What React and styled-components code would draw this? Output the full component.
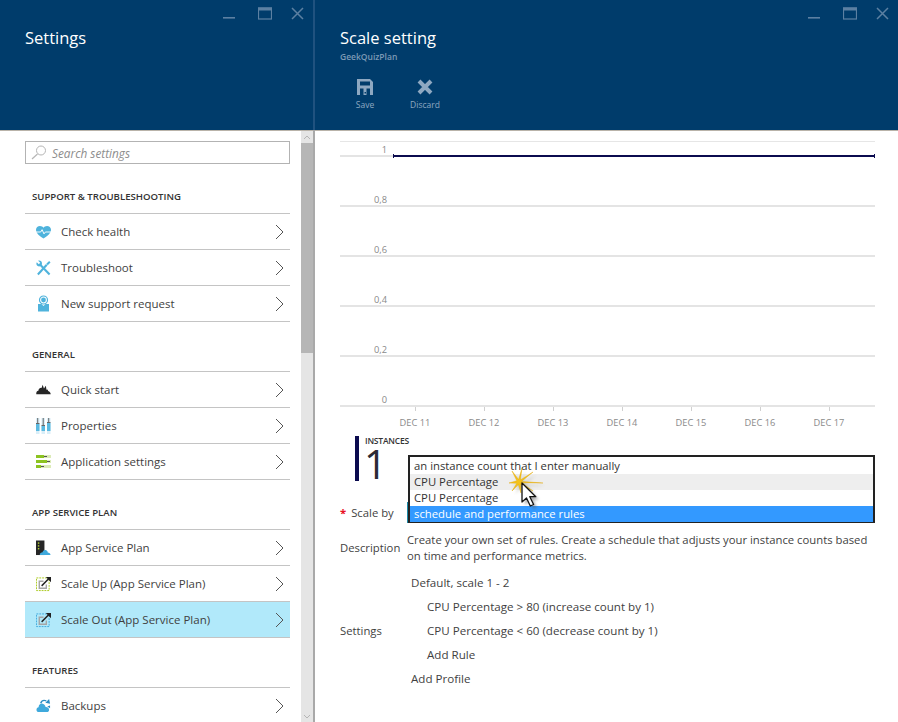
import React from 'react';
import styled, { createGlobalStyle } from 'styled-components';

const FONT = `'Open Sans', 'Noto Sans', sans-serif`;

const GlobalStyle = createGlobalStyle`
  * { box-sizing: border-box; }
  html, body { margin: 0; padding: 0; background: #fff; overflow: hidden; }
  body { font-family: ${FONT}; color: #3a3a3a; }
`;

const Page = styled.div`
  width: 898px;
  height: 722px;
  display: flex;
  overflow: hidden;
`;

const Blade = styled.section`
  display: flex;
  flex-direction: column;
  flex: ${(p) => (p.$grow ? 1 : 'none')};
  width: ${(p) => (p.$grow ? 'auto' : '313px')};
  min-width: 0;
  height: 100%;
`;

const Divider = styled.div`
  width: 2px;
  flex: none;
  height: 100%;
  background: linear-gradient(to bottom, #20527f 0, #20527f 130px, #a9a9a9 130px, #a9a9a9 100%);
`;

const Header = styled.header`
  height: 131px;
  flex: none;
  background: #003c6b;
  border-bottom: 1px solid #b9b3a9;
  display: flex;
  flex-direction: column;
`;

const WindowControls = styled.div`
  height: 26px;
  padding: 7px 9px 0 0;
  display: flex;
  justify-content: flex-end;
  gap: 21px;
  flex: none;
`;

const HeaderBody = styled.div`
  padding-left: ${(p) => p.$left}px;
`;

const Title = styled.h1`
  margin: 0;
  height: 24px;
  color: #fff;
  font-size: 16.5px;
  line-height: 24px;
  font-weight: 400;
`;

const Subtitle = styled.div`
  color: #7d9ab6;
  font-size: 8.5px;
  line-height: 12px;
  margin-top: 1px;
  font-weight: 600;
`;

const Commands = styled.div`
  display: flex;
  margin-top: 16px;
`;

const Command = styled.div`
  width: ${(p) => p.$w}px;
  display: flex;
  flex-direction: column;
  align-items: center;
  color: #8ea8c1;
  font-size: 8.5px;
  line-height: 12px;
  gap: 4px;
`;

const SideBody = styled.div`
  flex: 1;
  display: flex;
  min-height: 0;
`;

const SideContent = styled.div`
  flex: 1;
  padding: 10px 11px 0 25px;
  min-width: 0;
  overflow: hidden;
`;

const SearchBox = styled.div`
  height: 23px;
  border: 1px solid #b3b3b3;
  display: flex;
  align-items: center;
  padding-left: 5px;
  gap: 5px;
  color: #8d8d8d;
  font-size: 11.8px;
  font-style: italic;
`;

const SectionTitle = styled.h2`
  margin: 0;
  height: 50px;
  padding: 0 0 10px 7px;
  display: flex;
  align-items: flex-end;
  font-size: 9.6px;
  line-height: 13px;
  font-weight: 600;
  color: #333;
  border-bottom: 1px solid #c4c4c4;
`;

const Row = styled.div`
  height: 36px;
  display: flex;
  align-items: center;
  padding-left: 11px;
  border-bottom: 1px solid #c4c4c4;
  background: ${(p) => (p.$active ? '#b1e9fa' : 'transparent')};
  font-size: 11.5px;
  color: #3f3f3f;
`;

const RowIcon = styled.span`
  width: 15px;
  height: 16px;
  flex: none;
  display: flex;
  align-items: center;
  margin-right: 10px;
`;

const RowLabel = styled.span`
  flex: 1;
  white-space: nowrap;
`;

const Chevron = styled.svg`
  width: 9px;
  height: 16px;
  margin-right: 6px;
  flex: none;
`;

const Scrollbar = styled.div`
  width: 12px;
  flex: none;
  background: #e5e5e5;
  display: flex;
  flex-direction: column;
`;

const ScrollArrow = styled.div`
  height: 12px;
  flex: none;
  display: flex;
  align-items: center;
  justify-content: center;
  margin-top: ${(p) => (p.$up ? 0 : 'auto')};
`;

const ScrollThumb = styled.div`
  height: 210px;
  background: #b6b6b6;
`;

const MainBody = styled.div`
  flex: 1;
  padding: 10px 23px 0 25px;
  min-height: 0;
`;

const ChartSvg = styled.svg`
  display: block;
  width: 535px;
  height: 290px;
  text {
    font-family: ${FONT};
    font-size: 9.3px;
    fill: #8a8a8a;
  }
`;

const InstancesBlock = styled.div`
  margin: 5px 0 0 15px;
  height: 45px;
  border-left: 4px solid #0b0b4f;
  padding-left: 6px;
  display: flex;
  flex-direction: column;
`;

const InstancesLabel = styled.div`
  font-size: 8.5px;
  line-height: 10px;
  font-weight: 600;
  color: #333;
  letter-spacing: -0.2px;
`;

const InstancesValue = styled.div`
  font-size: 40px;
  line-height: 35px;
  font-weight: 400;
  color: #2b2b35;
  margin-left: -1px;
`;

const FormRow = styled.div`
  display: flex;
  align-items: ${(p) => (p.$center ? 'center' : 'flex-start')};
  margin-top: ${(p) => p.$top || 0}px;
  font-size: 11.3px;
  line-height: 16px;
  color: #3f3f3f;
`;

const FormLabel = styled.div`
  width: 67px;
  flex: none;
  padding-top: ${(p) => p.$pad || 0}px;
  white-space: nowrap;
`;

const Asterisk = styled.span`
  color: #e81123;
  font-weight: 700;
  margin-right: 5px;
`;

const SelectField = styled.div`
  flex: 1;
  height: 21px;
  border-left: 1px solid #1b8aa8;
  position: relative;
`;

const ListBox = styled.div`
  position: absolute;
  left: 0;
  right: 0;
  bottom: 0;
  height: 68px;
  background: #fff;
  border: 2px solid #222;
  padding: 1px 0;
`;

const Option = styled.div`
  height: 16px;
  line-height: 16px;
  padding-left: 4px;
  white-space: nowrap;
  color: ${(p) => (p.$selected ? '#fff' : '#333')};
  background: ${(p) => (p.$selected ? '#3399ff' : p.$hover ? '#eeeeee' : 'transparent')};
`;

const Pointer = styled.svg`
  position: absolute;
  left: 95px;
  top: 10px;
  width: 50px;
  height: 50px;
  overflow: visible;
`;

const Description = styled.div`
  flex: 1;
`;

const SettingsList = styled.div`
  flex: 1;
  display: flex;
  flex-direction: column;
  gap: 8px;
  padding-left: 4px;
  font-size: 11.6px;
`;

const SettingsItem = styled.div`
  padding-left: ${(p) => (p.$indent ? 16 : 0)}px;
`;

const WinIcon = ({ children }) => (
  <svg width="14" height="13" viewBox="0 0 14 13" fill="none">{children}</svg>
);

const WindowButtons = () => (
  <WindowControls>
    <WinIcon><rect x="0" y="10" width="12" height="1.6" fill="#5c80a2" /></WinIcon>
    <WinIcon>
      <rect x="0.5" y="1" width="13" height="11" stroke="#5c80a2" strokeWidth="1.2" />
      <rect x="0" y="0.5" width="14" height="3" fill="#5c80a2" />
    </WinIcon>
    <svg width="13" height="13" viewBox="0 0 13 13" fill="none" style={{ marginLeft: -2 }}>
      <path d="M1 1l11 11M12 1L1 12" stroke="#5c80a2" strokeWidth="1.5" />
    </svg>
  </WindowControls>
);

const HeartIcon = () => (
  <svg width="16" height="14" viewBox="0 0 16 14">
    <path d="M8 14C3.500 11 0 8 0 4.500 0 2 2 .5 4.200.5 6 .5 7.200 1.300 8 2.500 8.800 1.300 10 .5 11.800.5 14 .5 16 2 16 4.500 16 8 12.500 11 8 14z" fill="#4fb3dc" />
    <path d="M0 7h5l1.500-2.500 2 4.500 1.500-2h6" stroke="#fff" strokeWidth="1" fill="none" />
  </svg>
);

const WrenchIcon = () => (
  <svg width="16" height="16" viewBox="0 0 16 16">
    <path d="M2 15L11.500 4.500" stroke="#4fb3dc" strokeWidth="2.200" />
    <path d="M11 3.500L14 .5 15.500 2 12.500 5z" fill="#4fb3dc" />
    <path d="M14.500 15L4.500 4.500" stroke="#4fb3dc" strokeWidth="2.200" />
    <path d="M.8 1.800L3 4l1.500-1.500L2.300.3C4 -.3 6 .5 6.300 2.300 6.600 3.800 6 5 5 5.800 3.500 6.800 1.500 6.300.7 4.800.2 3.800.3 2.800.8 1.800z" fill="#4fb3dc" />
  </svg>
);

const SupportIcon = () => (
  <svg width="13" height="17" viewBox="0 0 13 17" style={{ marginLeft: 1 }}>
    <circle cx="6.500" cy="5" r="4" fill="none" stroke="#4fb3dc" strokeWidth="1.200" />
    <circle cx="6.500" cy="5" r="2.400" fill="#4fb3dc" />
    <path d="M1 9h3.500l2 2 2-2H12v7.500H1z" fill="#4fb3dc" />
  </svg>
);

const CloudDarkIcon = () => (
  <svg width="16" height="11" viewBox="0 0 16 11">
    <path d="M.3 10.500C0 8.500 1 7 2.500 6.800 3 4.500 4.500 3.500 6 3.800L7 .5l1.500 4L10.500 1.500l.7 4.500C11.800 5 12.500 5.500 13 7c1.500.3 2.700 1.800 2.700 3.500z" fill="#262626" />
  </svg>
);

const SlidersIcon = () => (
  <svg width="15" height="16" viewBox="0 0 15 16">
    {[0, 5.500, 11].map((x) => (
      <rect key={x} x={x} y="0" width="3.500" height="16" fill="#d9eef8" />
    ))}
    <rect x="0" y="6" width="3.500" height="7" fill="#5ab9e0" />
    <rect x="5.500" y="8" width="3.500" height="5" fill="#5ab9e0" />
    <rect x="11" y="5" width="3.500" height="8" fill="#5ab9e0" />
    <rect x="1.200" y="0" width="1" height="5" fill="#666" />
    <rect x="0" y="5" width="3.500" height="1" fill="#666" />
    <rect x="6.700" y="0" width="1" height="7" fill="#666" />
    <rect x="5.500" y="7" width="3.500" height="1" fill="#666" />
    <rect x="12.200" y="0" width="1" height="4" fill="#666" />
    <rect x="11" y="4" width="3.500" height="1" fill="#666" />
  </svg>
);

const AppSettingsIcon = () => (
  <svg width="15" height="13" viewBox="0 0 15 13">
    <rect x="0" y="0" width="15" height="3" fill="#dcebb8" />
    <rect x="0" y="5" width="15" height="3" fill="#dcebb8" />
    <rect x="0" y="10" width="15" height="3" fill="#dcebb8" />
    <rect x="0" y="0" width="8" height="3" fill="#8cc321" />
    <rect x="0" y="5" width="11" height="3" fill="#8cc321" />
    <rect x="0" y="10" width="5" height="3" fill="#8cc321" />
    <rect x="8" y="1" width="3" height="1" fill="#555" />
    <rect x="11" y="6" width="3" height="1" fill="#555" />
    <rect x="5" y="11" width="3" height="1" fill="#555" />
  </svg>
);

const PlanIcon = () => (
  <svg width="16" height="16" viewBox="0 0 16 16">
    <rect x="0" y="0" width="9" height="15.500" fill="#262626" />
    <rect x="2" y="2" width="1.500" height="1.500" fill="#b8d432" />
    <rect x="2" y="5" width="1.500" height="1.500" fill="#b8d432" />
    <rect x="2" y="8" width="1.500" height="1.500" fill="#b8d432" />
    <path d="M4 15.500c0-2 1.500-3 3-3 .5-2 2.500-3 4-2 1 .5 1.500 1.500 1.500 2.200 1.500 0 3 1 3 2.800z" fill="#3fa9dc" />
  </svg>
);

const ScaleIcon = ({ color }) => (
  <svg width="16" height="16" viewBox="0 0 16 16" fill="none">
    <rect x="0.500" y="1.500" width="13.500" height="13.500" stroke={color} strokeDasharray="2 1" />
    <path d="M8 5H3.500v7.500H11V8.500" stroke="#a5a5a5" strokeWidth="1.500" />
    <path d="M6 10L13.500 2.500" stroke="#222" strokeWidth="1.600" />
    <path d="M10.500 0.500h5.500V6z" fill="#222" />
  </svg>
);

const BackupIcon = () => (
  <svg width="16" height="14" viewBox="0 0 16 14">
    <path d="M3 13.500c-1.500 0-2.500-1-2.500-2.500s1-2.500 2.200-2.700C3 5.500 5 4 7 4.500c2 .5 3 2 3.200 3.500 2-.2 3.800 1 3.800 3 0 1.500-1 2.500-2.500 2.500z" fill="#3fa9dc" />
    <path d="M5 4c1-2.500 3.500-3.500 6-2.500" stroke="#2a8cc4" strokeWidth="1.500" fill="none" />
    <path d="M10 3.500l5 1-1-5z" fill="#2a8cc4" />
    <path d="M12 7.500l3-1v3z" fill="#2a8cc4" />
  </svg>
);

const SECTIONS = [
  {
    title: 'SUPPORT & TROUBLESHOOTING',
    rows: [
      { label: 'Check health', icon: <HeartIcon /> },
      { label: 'Troubleshoot', icon: <WrenchIcon /> },
      { label: 'New support request', icon: <SupportIcon /> },
    ],
  },
  {
    title: 'GENERAL',
    rows: [
      { label: 'Quick start', icon: <CloudDarkIcon /> },
      { label: 'Properties', icon: <SlidersIcon /> },
      { label: 'Application settings', icon: <AppSettingsIcon /> },
    ],
  },
  {
    title: 'APP SERVICE PLAN',
    rows: [
      { label: 'App Service Plan', icon: <PlanIcon /> },
      { label: 'Scale Up (App Service Plan)', icon: <ScaleIcon color="#a8c814" /> },
      { label: 'Scale Out (App Service Plan)', icon: <ScaleIcon color="#3fa9dc" />, active: true },
    ],
  },
  {
    title: 'FEATURES',
    rows: [{ label: 'Backups', icon: <BackupIcon /> }],
  },
];

const Y_LABELS = ['1', '0,8', '0,6', '0,4', '0,2', '0'];
const X_LABELS = ['DEC 11', 'DEC 12', 'DEC 13', 'DEC 14', 'DEC 15', 'DEC 16', 'DEC 17'];

const Chart = () => (
  <ChartSvg viewBox="0 0 535 290">
    <rect x="0" y="0" width="535" height="1" fill="#e6e6e6" />
    {Y_LABELS.map((label, i) => (
      <g key={label}>
        <rect x="0" y={14 + i * 50} width="535" height="2" fill="#e4e4e4" />
        <text x="47" y={12 + i * 50} textAnchor="end">{label}</text>
      </g>
    ))}
    <rect x="53" y="14" width="482" height="2" fill="#0b0b4f" />
    <rect x="53" y="13" width="1" height="4" fill="#0b0b4f" />
    <rect x="534" y="13" width="1" height="4" fill="#0b0b4f" />
    {X_LABELS.map((label, i) => (
      <g key={label}>
        <rect x={75 + i * 69} y="266" width="1" height="4" fill="#d0d0d0" />
        <text x={75 + i * 69} y="285" textAnchor="middle">{label}</text>
      </g>
    ))}
  </ChartSvg>
);

// star rays around (14, 15), the long one goes to the right
const STAR_TIPS = [[24, 1], [14, -10], [3, -14], [-7, -11], [-10, 1], [-7, 9], [2, 11], [14, 9]];
const starPoints = STAR_TIPS.flatMap(([x, y], i) => {
  const [nx, ny] = STAR_TIPS[(i + 1) % STAR_TIPS.length];
  const mx = (x + nx) / 2;
  const my = (y + ny) / 2;
  const len = Math.hypot(mx, my) || 1;
  return [`${14 + x},${15 + y}`, `${14 + (mx / len) * 2.5},${15 + (my / len) * 2.5}`];
}).join(' ');

const ARROW = 'M17 16v19l4.500-4 3.800 8 3.300-1.500-3.800-7.800h6z';

const CursorBurst = () => (
  <Pointer viewBox="0 0 50 50">
    <defs>
      <filter id="soft" x="-50%" y="-50%" width="200%" height="200%">
        <feGaussianBlur stdDeviation="1.500" />
      </filter>
    </defs>
    <polygon points={starPoints} fill="#6d6d50" opacity="0.4" filter="url(#soft)" transform="translate(3 3)" />
    <polygon points={starPoints} fill="#f3c21c" stroke="#e0a400" strokeWidth="0.400" />
    <path d={ARROW} fill="#555" opacity="0.5" filter="url(#soft)" transform="translate(3 3)" />
    <path d={ARROW} fill="#fff" stroke="#111" strokeWidth="1.300" strokeLinejoin="round" />
  </Pointer>
);

export default function App() {
  return (
    <Page>
      <GlobalStyle />
      <Blade>
        <Header>
          <WindowButtons />
          <HeaderBody $left={25}>
            <Title>Settings</Title>
          </HeaderBody>
        </Header>
        <SideBody>
          <SideContent>
            <SearchBox>
              <svg width="16" height="15" viewBox="0 0 16 15" fill="none">
                <circle cx="10" cy="5.500" r="4.500" stroke="#b5b5b5" />
                <path d="M6.500 9L1 14" stroke="#b5b5b5" strokeWidth="1.200" />
              </svg>
              Search settings
            </SearchBox>
            {SECTIONS.map((section) => (
              <div key={section.title}>
                <SectionTitle>{section.title}</SectionTitle>
                {section.rows.map((row) => (
                  <Row key={row.label} $active={row.active}>
                    <RowIcon>{row.icon}</RowIcon>
                    <RowLabel>{row.label}</RowLabel>
                    <Chevron viewBox="0 0 9 16" fill="none">
                      <path d="M1 1l7 7-7 7" stroke="#555" strokeWidth="1" />
                    </Chevron>
                  </Row>
                ))}
              </div>
            ))}
          </SideContent>
          <Scrollbar>
            <ScrollArrow $up>
              <svg width="8" height="5" viewBox="0 0 8 5" fill="none">
                <path d="M1 4l3-3 3 3" stroke="#b5b5b5" />
              </svg>
            </ScrollArrow>
            <ScrollThumb />
            <ScrollArrow>
              <svg width="8" height="5" viewBox="0 0 8 5" fill="none">
                <path d="M1 1l3 3 3-3" stroke="#b5b5b5" />
              </svg>
            </ScrollArrow>
          </Scrollbar>
        </SideBody>
      </Blade>
      <Divider />
      <Blade $grow>
        <Header>
          <WindowButtons />
          <HeaderBody $left={25}>
            <Title>Scale setting</Title>
            <Subtitle>GeekQuizPlan</Subtitle>
            <Commands>
              <Command $w={50}>
                <svg width="16" height="16" viewBox="0 0 16 16">
                  <path d="M0 0h13l3 3v13H0z" fill="#8ea8c1" />
                  <rect x="3" y="2.500" width="10" height="4" fill="#003c6b" />
                  <rect x="3" y="9.500" width="3.500" height="6.500" fill="#003c6b" />
                  <rect x="9.500" y="9.500" width="3.500" height="6.500" fill="#003c6b" />
                  <rect x="7.500" y="13" width="1.500" height="1.500" fill="#003c6b" />
                </svg>
                Save
              </Command>
              <Command $w={70}>
                <svg width="16" height="16" viewBox="0 0 16 16">
                  <path d="M2 2l12 12M14 2L2 14" stroke="#8ea8c1" strokeWidth="4" />
                </svg>
                Discard
              </Command>
            </Commands>
          </HeaderBody>
        </Header>
        <MainBody>
          <Chart />
          <InstancesBlock>
            <InstancesLabel>INSTANCES</InstancesLabel>
            <InstancesValue>1</InstancesValue>
          </InstancesBlock>
          <FormRow $center $top={21}>
            <FormLabel><Asterisk>*</Asterisk>Scale by</FormLabel>
            <SelectField>
              <ListBox>
                <Option>an instance count that I enter manually</Option>
                <Option $hover>CPU Percentage</Option>
                <Option>CPU Percentage</Option>
                <Option $selected>schedule and performance rules</Option>
                <CursorBurst />
              </ListBox>
            </SelectField>
          </FormRow>
          <FormRow $top={9}>
            <FormLabel $pad={8}>Description</FormLabel>
            <Description>
              Create your own set of rules. Create a schedule that adjusts your instance counts based on time and performance metrics.
            </Description>
          </FormRow>
          <FormRow $center $top={11}>
            <FormLabel>Settings</FormLabel>
            <SettingsList>
              <SettingsItem>Default, scale 1 - 2</SettingsItem>
              <SettingsItem $indent>CPU Percentage &gt; 80 (increase count by 1)</SettingsItem>
              <SettingsItem $indent>CPU Percentage &lt; 60 (decrease count by 1)</SettingsItem>
              <SettingsItem $indent>Add Rule</SettingsItem>
              <SettingsItem>Add Profile</SettingsItem>
            </SettingsList>
          </FormRow>
        </MainBody>
      </Blade>
    </Page>
  );
}
